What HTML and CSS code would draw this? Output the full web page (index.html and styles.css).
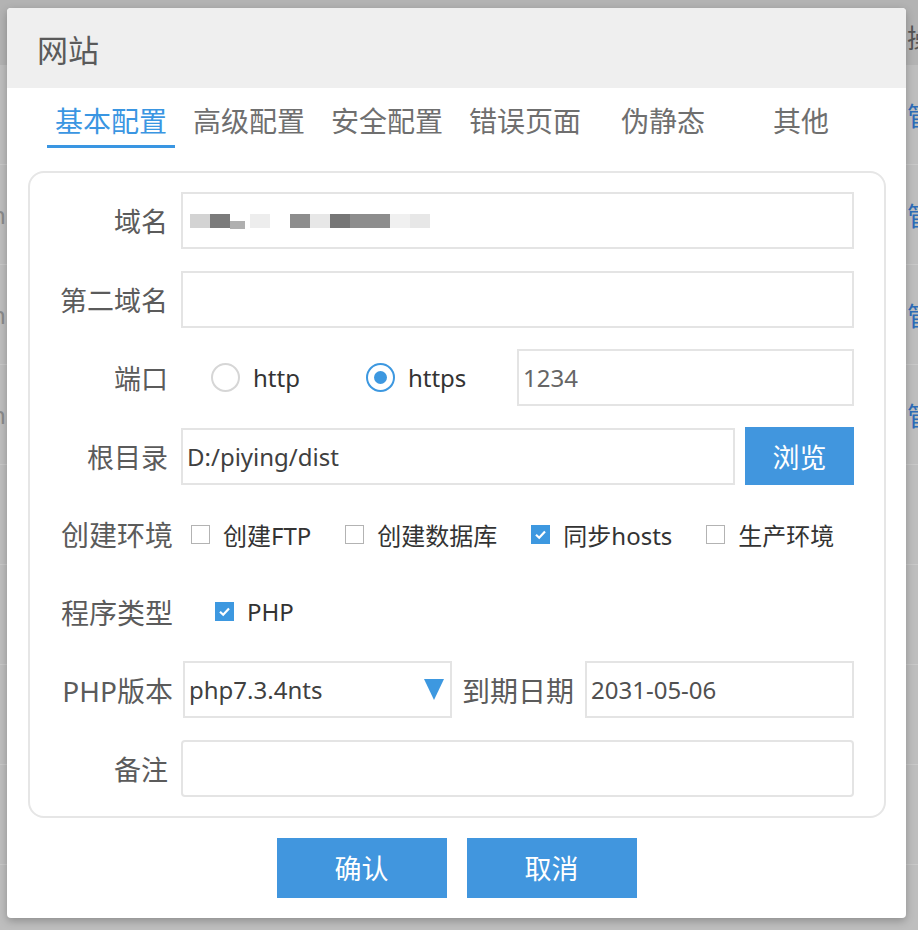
FILE: index.html
```html
<!DOCTYPE html>
<html lang="zh-CN">
<head>
<meta charset="utf-8">
<title>网站</title>
<link rel="stylesheet" href="styles.css">
</head>
<body>
<div class="page">
  <div class="bg-table">
    <div class="bg-head"><div class="bg-left"></div><div class="bg-right">操作</div></div>
    <div class="bg-row"><div class="bg-left"></div><div class="bg-right link">管理</div></div>
    <div class="bg-row"><div class="bg-left"><span>n</span></div><div class="bg-right link">管理</div></div>
    <div class="bg-row"><div class="bg-left"><span>n</span></div><div class="bg-right link">管理</div></div>
    <div class="bg-row"><div class="bg-left"><span>n</span></div><div class="bg-right link">管理</div></div>
    <div class="bg-row"><div class="bg-left"></div><div class="bg-right link"></div></div>
    <div class="bg-row"><div class="bg-left"></div><div class="bg-right link"></div></div>
    <div class="bg-row"><div class="bg-left"></div><div class="bg-right link"></div></div>
    <div class="bg-row"><div class="bg-left"></div><div class="bg-right link"></div></div>
  </div>

  <div class="dialog">
    <div class="dlg-head">网站</div>
    <div class="tabs">
      <div class="tab active">基本配置</div>
      <div class="tab">高级配置</div>
      <div class="tab">安全配置</div>
      <div class="tab">错误页面</div>
      <div class="tab">伪静态</div>
      <div class="tab">其他</div>
    </div>

    <div class="card">
      <div class="row">
        <div class="lbl">域名</div>
        <div class="input blur">
          <span class="bk w20 c1"></span><span class="bk w20 c2"></span><span class="bk w15 c3 low"></span><span class="sp5"></span><span class="bk w20 c4"></span><span class="sp20"></span><span class="bk w20 c5"></span><span class="bk w20 c6"></span><span class="bk w20 c7"></span><span class="bk w20 c5"></span><span class="bk w20 c5"></span><span class="bk w20 c8"></span><span class="bk w20 c6"></span>
        </div>
      </div>

      <div class="row">
        <div class="lbl">第二域名</div>
        <div class="input"></div>
      </div>

      <div class="row">
        <div class="lbl">端口</div>
        <div class="radios">
          <div class="opt"><span class="radio"></span><span class="opt-text">http</span></div>
          <div class="opt"><span class="radio on"></span><span class="opt-text">https</span></div>
        </div>
        <div class="input port">1234</div>
      </div>

      <div class="row">
        <div class="lbl">根目录</div>
        <div class="input dark">D:/piying/dist</div>
        <button class="btn browse">浏览</button>
      </div>

      <div class="row short">
        <div class="lbl wide">创建环境</div>
        <div class="checks">
          <div class="opt"><span class="cb"></span><span class="opt-text">创建FTP</span></div>
          <div class="opt"><span class="cb"></span><span class="opt-text">创建数据库</span></div>
          <div class="opt"><span class="cb on"><svg viewBox="0 0 19 19" width="19" height="19"><path d="M5 9.8 L8.2 12.8 L14 6.6" fill="none" stroke="#fff" stroke-width="2.2"/></svg></span><span class="opt-text">同步hosts</span></div>
          <div class="opt"><span class="cb"></span><span class="opt-text">生产环境</span></div>
        </div>
      </div>

      <div class="row short">
        <div class="lbl wide">程序类型</div>
        <div class="checks single">
          <div class="opt"><span class="cb on"><svg viewBox="0 0 19 19" width="19" height="19"><path d="M5 9.8 L8.2 12.8 L14 6.6" fill="none" stroke="#fff" stroke-width="2.2"/></svg></span><span class="opt-text">PHP</span></div>
        </div>
      </div>

      <div class="row">
        <div class="lbl wide">PHP版本</div>
        <div class="input select dark">php7.3.4nts<svg class="caret" viewBox="0 0 20 21" width="20" height="21"><polygon points="0,0 20,0 10,21" fill="#3d98e0"/></svg></div>
        <div class="lbl-mid">到期日期</div>
        <div class="input date">2031-05-06</div>
      </div>

      <div class="row">
        <div class="lbl">备注</div>
        <div class="input note"></div>
      </div>
    </div>

    <div class="actions">
      <button class="btn big">确认</button>
      <button class="btn big">取消</button>
    </div>
  </div>
</div>
</body>
</html>
```

FILE: styles.css
```css
* { box-sizing: border-box; }

body {
  margin: 0;
  font-family: "Noto Sans", "Noto Sans CJK SC", sans-serif;
}

.page {
  position: relative;
  width: 918px;
  height: 930px;
  overflow: hidden;
  background: #bebebe;
}

/* background table under the modal */
.bg-head {
  display: flex;
  justify-content: space-between;
  align-items: center;
  height: 65px;
  padding-top: 8px;
  background: #b3b3b3;
}
.bg-row {
  display: flex;
  justify-content: space-between;
  align-items: center;
  height: 100px;
  border-bottom: 1px solid #c9c9c9;
}
.bg-left {
  width: 7px;
  overflow: hidden;
  white-space: nowrap;
  font-size: 24px;
  color: #8a8a8a;
}
.bg-left span { margin-left: -9px; }
.bg-right {
  width: 11px;
  overflow: hidden;
  white-space: nowrap;
  font-size: 26px;
  color: #555;
}
.bg-right.link { color: #2d6db8; }

/* modal */
.dialog {
  position: absolute;
  left: 7px;
  top: 8px;
  width: 899px;
  background: #fff;
  border-radius: 4px;
  box-shadow: 0 3px 8px rgba(0, 0, 0, 0.25);
  padding-bottom: 20px;
}
.dlg-head {
  height: 80px;
  display: flex;
  align-items: center;
  padding-left: 30px;
  background: #efefef;
  border-radius: 4px 4px 0 0;
  font-size: 31px;
  color: #5a5a5a;
}

.tabs {
  display: flex;
  gap: 10px;
  padding-left: 40px;
}
.tab {
  width: 128px;
  text-align: center;
  font-size: 28px;
  line-height: 28px;
  padding: 19px 0 10px;
  border-bottom: 3px solid transparent;
  color: #6f6f6f;
}
.tab.active {
  color: #3a96e2;
  border-bottom-color: #3a96e2;
}

.card {
  margin: 23px 20px 0 21px;
  border: 2px solid #e6e6e6;
  border-radius: 16px;
  padding: 19px 30px 19px 0;
  display: flex;
  flex-direction: column;
  gap: 21.5px;
}

.row {
  display: flex;
  align-items: center;
  height: 57px;
}
.row.short { height: 56px; }

.lbl {
  flex: none;
  width: 138px;
  margin-right: 13px;
  text-align: right;
  font-size: 27px;
  color: #5b5b5b;
}
.lbl.wide {
  width: 143px;
  margin-right: 8px;
  font-size: 28px;
}
.lbl-mid {
  flex: none;
  margin: 0 11px 0 10px;
  font-size: 28px;
  color: #5b5b5b;
}

.input {
  flex: 1;
  height: 57px;
  border: 2px solid #e4e4e4;
  display: flex;
  align-items: center;
  padding-left: 4px;
  font-size: 24px;
  color: #666;
  background: #fff;
}
.input.dark { color: #404040; }
.input.note { border-radius: 4px; }
.input.port {
  flex: none;
  width: 337px;
  margin-left: auto;
}
.input.select {
  flex: none;
  width: 269px;
  justify-content: space-between;
  padding-right: 6px;
  margin-left: 2px;
}
.input.date { color: #505050; }
.caret { flex: none; }

/* blurred domain */
.input.blur { padding-left: 7px; }
.bk { display: inline-block; height: 14px; flex: none; }
.bk.low { height: 8px; margin-top: 8px; }
.w20 { width: 20px; }
.w15 { width: 15px; }
.sp5 { width: 5px; flex: none; }
.sp20 { width: 20px; flex: none; }
.c1 { background: #d3d3d3; }
.c2 { background: #7b7b7b; }
.c3 { background: #b0b0b0; }
.c4 { background: #ededed; }
.c5 { background: #8d8d8d; }
.c6 { background: #e7e7e7; }
.c7 { background: #767676; }
.c8 { background: #f0f0f0; }

/* radios */
.radios {
  display: flex;
  gap: 66px;
  margin-left: 30px;
}
.opt {
  display: flex;
  align-items: center;
  gap: 13px;
}
.opt-text {
  font-size: 24px;
  color: #333;
}
.radio {
  width: 29px;
  height: 29px;
  border-radius: 50%;
  border: 2px solid #d6d6d6;
  display: flex;
  align-items: center;
  justify-content: center;
}
.radio.on { border-color: #3d98e0; }
.radio.on::after {
  content: "";
  width: 13px;
  height: 13px;
  border-radius: 50%;
  background: #3d98e0;
}

/* checkboxes */
.checks {
  display: flex;
  gap: 34px;
  margin-left: 10px;
}
.checks.single { margin-left: 34px; }
.cb {
  width: 19px;
  height: 19px;
  border: 1.5px solid #b3b3b3;
  background: #fff;
  display: flex;
}
.cb.on {
  border: none;
  background: #3d98e0;
}

/* buttons */
.btn {
  border: none;
  background: #4196de;
  color: #fff;
  font-family: inherit;
  font-size: 27px;
  padding: 0;
}
.btn.browse {
  flex: none;
  width: 109px;
  height: 58px;
  margin-left: 10px;
}
.actions {
  display: flex;
  justify-content: center;
  gap: 20px;
  margin-top: 20px;
}
.btn.big {
  width: 170px;
  height: 60px;
}
```
